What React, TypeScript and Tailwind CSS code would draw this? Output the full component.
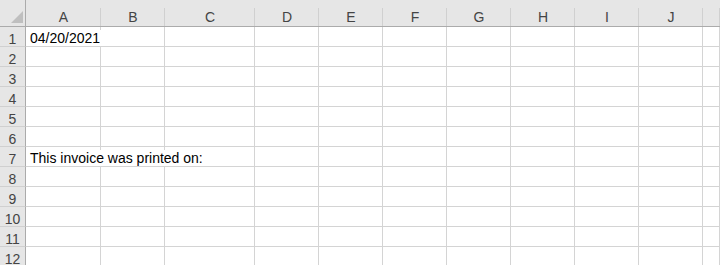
import React from "react";

const cols = ["A", "B", "C", "D", "E", "F", "G", "H", "I", "J", ""];
const rows = [1, 2, 3, 4, 5, 6, 7, 8, 9, 10, 11, 12];

const cellText: Record<string, string> = {
  "1-0": "04/20/2021",
  "7-0": "This invoice was printed on:",
};

export default function App() {
  return (
    <div
      className="w-[720px] h-[265px] overflow-hidden bg-white"
      style={{ fontFamily: '"Liberation Sans", Arial, sans-serif' }}
    >
      <div className="grid grid-cols-[26px_75px_64px_90px_64px_64px_64px_64px_64px_64px_64px_1fr] grid-rows-[27px_repeat(12,20px)]">
        {/* header row */}
        <div className="bg-[#e6e6e6] border-b border-r border-[#ababab] relative">
          <div
            className="absolute right-[2px] bottom-[3px] w-[12px] h-[12px] bg-[#bfbfbf]"
            style={{ clipPath: "polygon(100% 0, 100% 100%, 0 100%)" }}
          />
        </div>
        {cols.map((c, i) => (
          <div
            key={c + i}
            className="bg-[#e6e6e6] border-b border-[#ababab] relative flex items-start justify-center pt-[8px] text-[14px] leading-[19px] text-[#444444]"
          >
            <span>{c}</span>
            <div className="absolute right-0 top-[8px] bottom-0 w-px bg-[#d0d0d0]" />
          </div>
        ))}
        {rows.map((r) => (
          <React.Fragment key={r}>
            <div className="bg-[#e6e6e6] border-r border-b border-[#d0d0d0] border-r-[#ababab] flex items-start justify-center pt-[3px] text-[14px] leading-[19px] text-[#444444]">
              {r}
            </div>
            {cols.map((c, i) => (
              <div
                key={c + i}
                className="border-r border-b border-[#d4d4d4] relative"
              >
                {cellText[`${r}-${i}`] && (
                  <span className="absolute left-[4px] top-[3px] leading-[16px] whitespace-nowrap text-[14px] text-black z-10 bg-white pr-[2px]">
                    {cellText[`${r}-${i}`]}
                  </span>
                )}
              </div>
            ))}
          </React.Fragment>
        ))}
      </div>
    </div>
  );
}
